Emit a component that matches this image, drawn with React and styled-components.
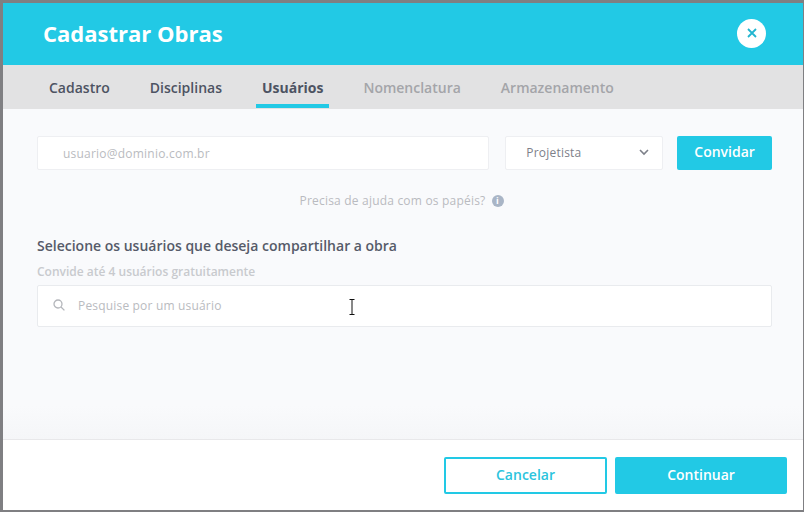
import React from 'react';
import styled, { createGlobalStyle } from 'styled-components';

const GlobalStyle = createGlobalStyle`
	html, body {
		margin: 0;
		padding: 0;
		height: 100%;
		background: #7f7f82;
		font-family: "Open Sans", "Liberation Sans", sans-serif;
	}
	* {
		box-sizing: border-box;
	}
`;

const Modal = styled.div`
	position: relative;
	width: 800px;
	height: 507px;
	margin: 3px 1px 2px 3px;
	display: flex;
	flex-direction: column;
	background: #f8f9fb;
	overflow: hidden;
`;

const Header = styled.header`
	height: 62px;
	flex: none;
	display: flex;
	align-items: center;
	justify-content: space-between;
	padding: 0 37px 2px 40px;
	background: #22c9e5;
`;

const Title = styled.h1`
	margin: 0;
	font-size: 22px;
	font-weight: 700;
	color: #fff;
`;

const CloseButton = styled.button`
	width: 29px;
	height: 29px;
	padding: 0;
	border: none;
	border-radius: 50%;
	background: #fff;
	color: #22b5d0;
	display: flex;
	align-items: center;
	justify-content: center;
`;

const Tabs = styled.nav`
	height: 44px;
	flex: none;
	display: flex;
	gap: 28px;
	padding-left: 40px;
	background: #e2e2e3;
`;

const Tab = styled.div`
	height: 43px;
	padding: 5px 6px 0;
	display: flex;
	align-items: center;
	font-size: 14px;
	font-weight: ${p => (p.$active ? 700 : 600)};
	color: ${p => (p.$disabled ? '#a4a5a9' : '#4d5362')};
	border-bottom: 4px solid ${p => (p.$active ? '#22c9e5' : 'transparent')};
`;

const Body = styled.main`
	flex: 1;
	padding: 27px 31px 0 34px;
	background: linear-gradient(#f9fafc 90%, #f5f6f8);
`;

const InviteRow = styled.div`
	display: flex;
	align-items: flex-start;
	gap: 14px;
`;

const EmailField = styled.div`
	width: 453px;
	height: 34px;
	margin-right: 2px;
	padding-left: 25px;
	display: flex;
	align-items: center;
	font-size: 12px;
	letter-spacing: 0.22px;
	color: #b9bbc0;
	background: #fff;
	border: 1px solid #eeeff2;
	border-radius: 2px;
`;

const RoleSelect = styled.div`
	width: 158px;
	height: 34px;
	padding: 0 13px 2px 20px;
	display: flex;
	align-items: center;
	justify-content: space-between;
	font-size: 12px;
	letter-spacing: 0.2px;
	color: #7d8089;
	background: #fff;
	border: 1px solid #eeeff2;
	border-radius: 2px;
`;

const InviteButton = styled.button`
	width: 95px;
	height: 34px;
	padding: 0 0 3px;
	border: none;
	border-radius: 2px;
	background: #22c9e5;
	color: #fff;
	font-family: inherit;
	font-size: 14px;
	font-weight: 600;
`;

const HelpRow = styled.div`
	margin-top: 22px;
	padding-right: 6px;
	display: flex;
	align-items: center;
	justify-content: center;
	gap: 6px;
	font-size: 12px;
	letter-spacing: 0.2px;
	color: #b9bbc0;
`;

const InfoDot = styled.span`
	width: 12px;
	height: 12px;
	border-radius: 50%;
	background: #a9b5c6;
	color: #fff;
	display: flex;
	align-items: center;
	justify-content: center;
	font-size: 9px;
	font-weight: 700;
`;

const SectionTitle = styled.h2`
	margin: 27px 0 0;
	font-size: 14px;
	line-height: 20px;
	font-weight: 600;
	color: #565b69;
`;

const SectionHint = styled.p`
	margin: 8px 0 0;
	font-size: 12px;
	line-height: 16px;
	font-weight: 600;
	color: #c8cace;
`;

const SearchField = styled.div`
	height: 42px;
	margin-top: 5px;
	padding: 0 0 2px 15px;
	display: flex;
	align-items: center;
	gap: 13px;
	font-size: 12px;
	letter-spacing: 0.18px;
	color: #b9bbc0;
	background: #fff;
	border: 1px solid #e9ebee;
	border-radius: 2px;
`;

const TextCursor = styled.svg`
	position: absolute;
	left: 342px;
	top: 296px;
`;

const Footer = styled.footer`
	height: 71px;
	flex: none;
	display: flex;
	justify-content: flex-end;
	gap: 8px;
	padding: 17px 16px 0 0;
	background: #fff;
	border-top: 1px solid #e8e8ea;
`;

const FooterButton = styled.button`
	width: ${p => (p.$primary ? '172px' : '163px')};
	height: 37px;
	padding: 0 0 2px;
	border: 2px solid #22c9e5;
	border-radius: 2px;
	background: ${p => (p.$primary ? '#22c9e5' : '#fff')};
	color: ${p => (p.$primary ? '#fff' : '#2cc4dd')};
	font-family: inherit;
	font-size: 14px;
	font-weight: 600;
`;

const App = () => {
	return (
		<>
			<GlobalStyle />
			<Modal>
				<Header>
					<Title>Cadastrar Obras</Title>
					<CloseButton aria-label="Fechar">
						<svg width="10" height="10" viewBox="0 0 10 10" fill="none" stroke="currentColor" strokeWidth="1.8">
							<path d="M1 1l8 8M9 1l-8 8" />
						</svg>
					</CloseButton>
				</Header>
				<Tabs>
					<Tab>Cadastro</Tab>
					<Tab>Disciplinas</Tab>
					<Tab $active>Usuários</Tab>
					<Tab $disabled>Nomenclatura</Tab>
					<Tab $disabled>Armazenamento</Tab>
				</Tabs>
				<Body>
					<InviteRow>
						<EmailField>usuario@dominio.com.br</EmailField>
						<RoleSelect>
							Projetista
							<svg width="10" height="7" viewBox="0 0 10 7" fill="none" stroke="#7d8089" strokeWidth="1.6">
								<path d="M1 1l4 4 4-4" />
							</svg>
						</RoleSelect>
						<InviteButton>Convidar</InviteButton>
					</InviteRow>
					<HelpRow>
						Precisa de ajuda com os papéis?
						<InfoDot>i</InfoDot>
					</HelpRow>
					<SectionTitle>Selecione os usuários que deseja compartilhar a obra</SectionTitle>
					<SectionHint>Convide até 4 usuários gratuitamente</SectionHint>
					<SearchField>
						<svg width="12" height="12" viewBox="0 0 12 12" fill="none" stroke="#b4b6bb" strokeWidth="1.3">
							<circle cx="5" cy="5" r="4" />
							<path d="M8 8l3.4 3.4" />
						</svg>
						Pesquise por um usuário
					</SearchField>
				</Body>
				<Footer>
					<FooterButton>Cancelar</FooterButton>
					<FooterButton $primary>Continuar</FooterButton>
				</Footer>
				<TextCursor width="14" height="16" viewBox="0 0 14 16" fill="none" stroke="#111" strokeWidth="1">
					<path d="M4.500 .5h5M7 .5v15M4.500 15.500h5" />
				</TextCursor>
			</Modal>
		</>
	);
};

export default App;
